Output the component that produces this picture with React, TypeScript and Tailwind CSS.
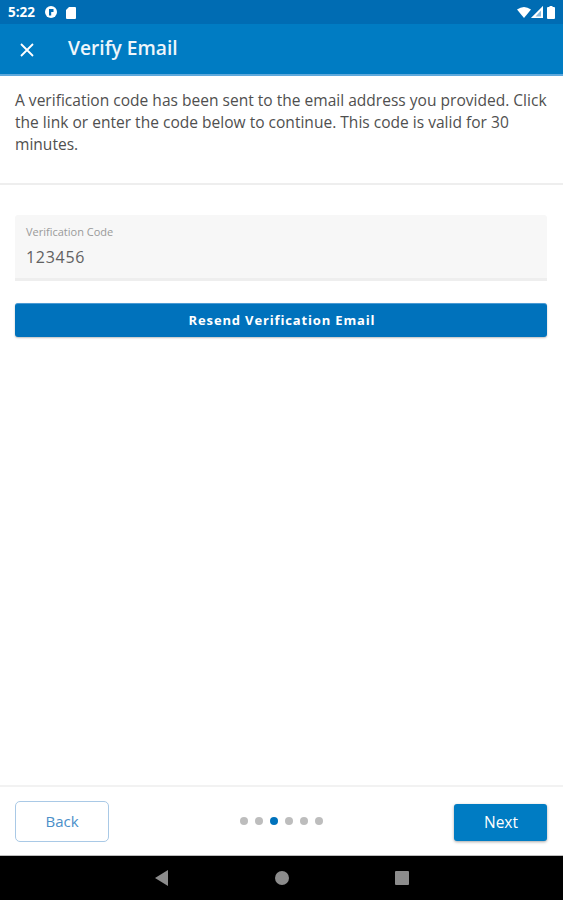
export default function App() {
  return (
    <div className="flex flex-col w-[563px] h-[900px] bg-white overflow-hidden font-['Open_Sans',sans-serif]">
      <div className="h-6 shrink-0 bg-[#006cb3] flex items-center px-2 text-white">
        <span className="text-[13.500px] font-bold w-[28px] leading-none mt-[1px]">5:22</span>
        <svg width="14" height="14" viewBox="0 0 14 14" className="ml-[8px]">
          <circle cx="7" cy="7" r="6" fill="#fff" />
          <path d="M5 10.500V4h4.500v3H7.200v3.500z" fill="#006cb3" />
        </svg>
        <svg width="12" height="13" viewBox="0 0 12 13" className="ml-[7px]">
          <path d="M4 1h6a1 1 0 0 1 1 1v10a1 1 0 0 1-1 1H2a1 1 0 0 1-1-1V4z" fill="#fff" />
        </svg>
        <div className="ml-auto flex items-center">
          <svg width="14" height="11" viewBox="0 0 14 11"><path d="M0 2.500Q7-2.500 14 2.500L7 11z" fill="#fff" /></svg>
          <svg width="12" height="12" viewBox="0 0 12 12"><path d="M12 0V12H0z" fill="#fff" fillOpacity="0.55" /><path d="M12 0V12H0zM10 4.500L4.500 10.500H10z" fill="#fff" fillRule="evenodd" /></svg>
          <svg width="8" height="13" viewBox="0 0 8 13" className="ml-[4px]"><path d="M2.500 0h3v1H7a1 1 0 0 1 1 1v10a1 1 0 0 1-1 1H1a1 1 0 0 1-1-1V2a1 1 0 0 1 1-1h1.500z" fill="#fff" /></svg>
        </div>
      </div>
      <div className="h-[52px] shrink-0 bg-[#007cc3] border-b-2 border-[#5fa9dc] flex items-center pl-5">
        <svg width="14" height="14" viewBox="0 0 14 14" className="mt-[2px]">
          <path d="M1 1l12 12M13 1L1 13" stroke="#fff" strokeWidth="1.800" fill="none" />
        </svg>
        <span className="ml-[34px] text-[19.200px] font-semibold text-[#eef6fb] leading-none mb-[2px]">Verify Email</span>
      </div>
      <div className="h-[109px] shrink-0 border-b-2 border-[#eeeeee] pl-[15px] pr-[14px] pt-[13px] text-[15.550px] leading-[22px] text-[#4f4f4f]">
        A verification code has been sent to the email address you provided. Click the link or enter the code below to continue. This code is valid for 30 minutes.
      </div>
      <div className="flex-1 pl-[15px] pr-[16px] pt-[30px]">
        <div className="h-[66px] bg-[#f7f7f7] border-b-[3px] border-[#eeeeee] rounded-t-[3px] px-[11px] pt-[9px]">
          <div className="text-[11px] leading-[15px] text-[#9a9a9a]">Verification Code</div>
          <div className="text-[16px] leading-[22px] mt-[7px] text-[#616161] tracking-[0.7px]">123456</div>
        </div>
        <div className="mt-[22px] h-[34px] pl-[2px] bg-[#0072bc] rounded-[3px] border-t border-[#4a9ad4] shadow-[0_1px_2px_rgba(0,0,0,0.25)] flex items-center justify-center text-white text-[13px] font-bold tracking-[0.85px]">
          Resend Verification Email
        </div>
      </div>
      <div className="h-[71px] shrink-0 border-t-2 border-[#f2f2f2] flex items-center justify-between pl-[15px] pr-[16px] border-b border-b-[#bdbdbd]">
        <div className="w-[94px] h-[41px] rounded-[5px] border border-[#a9c9e6] flex items-center justify-center text-[#4b8fc9] text-[15px]">Back</div>
        <div className="flex items-center gap-[7px] mr-[1px] mb-[1px]">
          {[0, 1, 2, 3, 4, 5].map((i) => (
            <div key={i} className={i === 2 ? "w-2 h-2 rounded-full bg-[#0072bc]" : "w-2 h-2 rounded-full bg-[#bdbdbd]"} />
          ))}
        </div>
        <div className="w-[93px] h-[37px] mt-[2px] pl-[1px] pt-[1px] rounded-[3px] bg-[#007cc3] shadow-[0_1px_3px_rgba(0,0,0,0.35)] flex items-center justify-center text-white text-[15.500px] font-medium">Next</div>
      </div>
      <div className="h-[44px] shrink-0 bg-black flex items-center pb-[1px]">
        <svg width="14" height="16" viewBox="0 0 14 16" className="ml-[155px]"><path d="M13 0v16L0 8z" fill="#8c8c8c" /></svg>
        <div className="w-[14px] h-[14px] rounded-full bg-[#8c8c8c] ml-[106px]" />
        <div className="w-[14px] h-[14px] rounded-[1px] bg-[#8c8c8c] ml-[106px]" />
      </div>
    </div>
  );
}
